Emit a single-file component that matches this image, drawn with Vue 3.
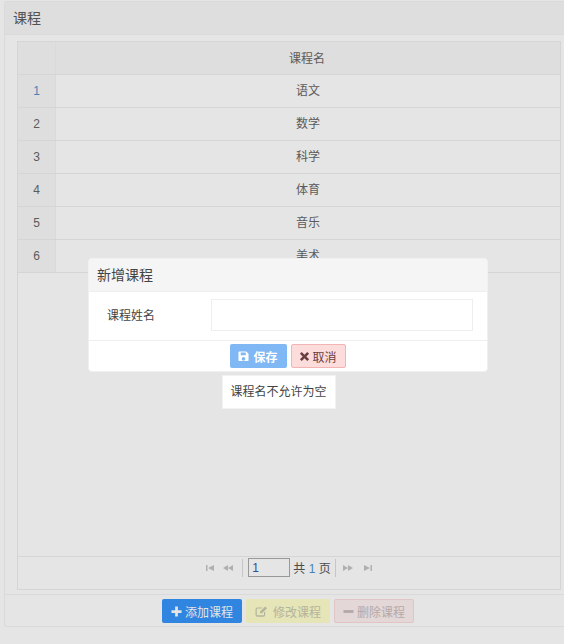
<script setup>
const rows = [
  { n: 1, name: '语文' },
  { n: 2, name: '数学' },
  { n: 3, name: '科学' },
  { n: 4, name: '体育' },
  { n: 5, name: '音乐' },
  { n: 6, name: '美术' },
]
</script>

<template>
  <div class="page">
    <section class="panel">
      <header class="panel-head">课程</header>
      <div class="panel-body">
        <div class="grid">
          <div class="table">
            <div class="row head">
              <div class="num"></div>
              <div class="cell">课程名</div>
            </div>
            <div v-for="r in rows" :key="r.n" class="row">
              <div class="num" :class="{ first: r.n === 1 }">{{ r.n }}</div>
              <div class="cell">{{ r.name }}</div>
            </div>
          </div>
          <div class="pager">
            <svg class="pi" viewBox="0 0 10 8"><path d="M1 1h1.500v6H1zM9 1v6L3 4z" /></svg>
            <svg class="pi second" viewBox="0 0 10 8"><path d="M5 1v6L0 4zM10 1v6L5 4z" /></svg>
            <span class="sep left"></span>
            <input class="page-input" value="1" readonly />
            <span class="total">共 <b>1</b> 页</span>
            <span class="sep right"></span>
            <svg class="pi" viewBox="0 0 10 8"><path d="M0 1v6l5-3zM5 1v6l5-3z" /></svg>
            <svg class="pi last" viewBox="0 0 10 8"><path d="M1 1v6l6-3zM7.500 1H9v6H7.500z" /></svg>
          </div>
        </div>
      </div>
      <footer class="panel-foot">
        <button class="btn primary">
          <svg class="ic" viewBox="0 0 12 12"><path d="M4.500 0.500h3v4h4v3h-4v4h-3v-4h-4v-3h4z" /></svg>添加课程
        </button>
        <button class="btn warn">
          <svg class="ic wide" viewBox="0 0 14 12"><path d="M2.500 1.500H8L6.800 2.800H2.500q-.7 0-.7.700v6q0 .7.700.7h6.500q.7 0 .7-.7V7l1.300-1.300v4q0 2-2 2H2.500q-2 0-2-2v-6q0-2 2-2zM11 .5l2 2-5.500 5.500H5.500V6z" /></svg>修改课程
        </button>
        <button class="btn danger">
          <svg class="ic" viewBox="0 0 12 12"><path d="M0.500 4.500h11v3h-11z" /></svg>删除课程
        </button>
      </footer>
    </section>

    <div class="mask"></div>

    <div class="dialog">
      <header class="dialog-head">新增课程</header>
      <div class="dialog-body">
        <label class="label">课程姓名</label>
        <input class="field" />
      </div>
      <footer class="dialog-foot">
        <button class="btn save">
          <svg class="ic" viewBox="0 0 12 12"><path fill-rule="evenodd" d="M1.500.5h7.500l2.500 2.500v7q0 1-1 1h-9q-1 0-1-1v-8.500q0-1 1-1zM3 1.500v3h5.500v-3zM6 6.500a2 2 0 1 0 0 4 2 2 0 0 0 0-4z" /></svg>保存
        </button>
        <button class="btn cancel">
          <svg class="ic" viewBox="0 0 12 12"><path d="M3 1l3 3 3-3 2 2-3 3 3 3-2 2-3-3-3 3-2-2 3-3-3-3z" /></svg>取消
        </button>
      </footer>
    </div>

    <div class="toast">课程名不允许为空</div>
  </div>
</template>

<style>
html, body { margin: 0; padding: 0; background: #fff; overflow: hidden; }
</style>

<style scoped>
.page {
  position: relative;
  width: 564px;
  height: 644px;
  overflow: hidden;
  box-sizing: border-box;
  padding: 1px 0 0 4px;
  font-family: "Liberation Sans", "Noto Sans CJK SC", sans-serif;
  font-size: 12px;
  color: #333;
}
.panel {
  height: 626px;
  border: 1px solid #f3f3f3;
  border-right: 0;
  border-radius: 3px 0 0 3px;
  box-sizing: border-box;
  display: flex;
  flex-direction: column;
}
.panel-head {
  height: 33px;
  flex: none;
  box-sizing: border-box;
  padding-left: 8px;
  line-height: 32px;
  font-size: 14px;
  background: #f8f8f8;
  border-bottom: 1px solid #f3f3f3;
  color: #5c5c5c;
}
.panel-body {
  flex: 1;
  min-height: 0;
  padding: 6px 3px 4px 12px;
  display: flex;
}
.grid {
  flex: 1;
  border: 1px solid #eee;
  display: flex;
  flex-direction: column;
}
.table { flex: 1; }
.row {
  display: flex;
  height: 33px;
  box-sizing: border-box;
  border-bottom: 1px solid #eee;
}
.row.head { background: #f8f8f8; height: 33px; }
.row.head .cell { line-height: 34px; padding-right: 2px; }
.num {
  width: 38px;
  flex: none;
  box-sizing: border-box;
  border-right: 1px solid #f3f3f3;
  background: #f8f8f8;
  text-align: center;
  line-height: 32px;
  color: #666;
}
.num.first { color: #4f93cc; }
.cell {
  flex: 1;
  text-align: center;
  line-height: 32px;
  color: #666;
}
.pager {
  height: 33px;
  flex: none;
  box-sizing: border-box;
  border-top: 1px solid #eee;
  display: flex;
  align-items: center;
  justify-content: center;
  padding-bottom: 11px;
  color: #555;
}
.pi { width: 10px; height: 8px; fill: #c4c4c4; }
.pi.second { margin-left: 8px; }
.pi.last { margin-left: 10px; }
.sep { width: 1px; height: 18px; background: #ddd; }
.sep.left { margin: 0 5px 0 9px; }
.sep.right { margin: 0 7px 0 4px; }
.page-input {
  width: 42px;
  height: 19px;
  margin-right: 3px;
  box-sizing: border-box;
  border: 1px solid #aaa;
  background: #fff;
  padding: 0 3px;
  font: inherit;
  color: #3a55b0;
  outline: none;
}
.total { font-size: 12px; white-space: nowrap; }
.total b { font-weight: 400; color: #4f93cc; }
.panel-foot {
  height: 32px;
  flex: none;
  box-sizing: border-box;
  border-top: 1px solid #f3f3f3;
  display: flex;
  justify-content: center;
  align-items: center;
  gap: 4px;
  padding: 1px 0 0 7px;
}
.btn {
  height: 24px;
  box-sizing: border-box;
  border: 1px solid transparent;
  border-radius: 2px;
  padding: 0;
  font: inherit;
  display: inline-flex;
  align-items: center;
  justify-content: center;
  gap: 3px;
}
.ic { width: 11px; height: 11px; fill: currentColor; flex: none; }
.ic.wide { width: 13px; }
.primary { width: 80px; background: #3595f9; color: #fff; }
.warn { width: 84px; gap: 5px; background: #ffffcd; color: #c9c9ae; }
.danger { width: 80px; background: #fdf0f0; border-color: #fbdcdc; color: #c9bcbc; }
.mask {
  position: absolute;
  inset: 0;
  background: rgba(0, 0, 0, 0.1);
}
.dialog {
  position: absolute;
  left: 88px;
  top: 258px;
  width: 400px;
  height: 114px;
  box-sizing: border-box;
  background: #fff;
  border: 1px solid #f0f0f0;
  border-radius: 4px;
  overflow: hidden;
  display: flex;
  flex-direction: column;
}
.dialog-head {
  height: 33px;
  flex: none;
  box-sizing: border-box;
  padding-left: 8px;
  line-height: 32px;
  font-size: 14px;
  background: #f5f5f5;
  border-bottom: 1px solid #eee;
  color: #444;
}
.dialog-body {
  height: 49px;
  flex: none;
  box-sizing: border-box;
  border-bottom: 1px solid #eee;
  display: flex;
  align-items: center;
  padding: 0 14px 2px 18px;
}
.label { width: 104px; flex: none; padding-bottom: 2px; color: #444; }
.field {
  flex: 1;
  min-width: 0;
  height: 32px;
  box-sizing: border-box;
  border: 1px solid #eee;
  background: #fff;
  outline: none;
}
.dialog-foot {
  flex: 1;
  display: flex;
  justify-content: center;
  align-items: center;
  gap: 4px;
  padding-right: 1px;
}
.save { width: 57px; gap: 4px; background: #7fb8f5; color: #fff; font-weight: 700; }
.cancel { width: 55px; gap: 2px; background: #fddcdc; border-color: #f4b4b4; color: #6b4040; }
.toast {
  position: absolute;
  left: 222px;
  top: 375px;
  width: 114px;
  height: 34px;
  box-sizing: border-box;
  padding-right: 1px;
  background: #fff;
  border: 1px solid #f2f2f2;
  text-align: center;
  line-height: 33px;
  color: #444;
}
</style>
